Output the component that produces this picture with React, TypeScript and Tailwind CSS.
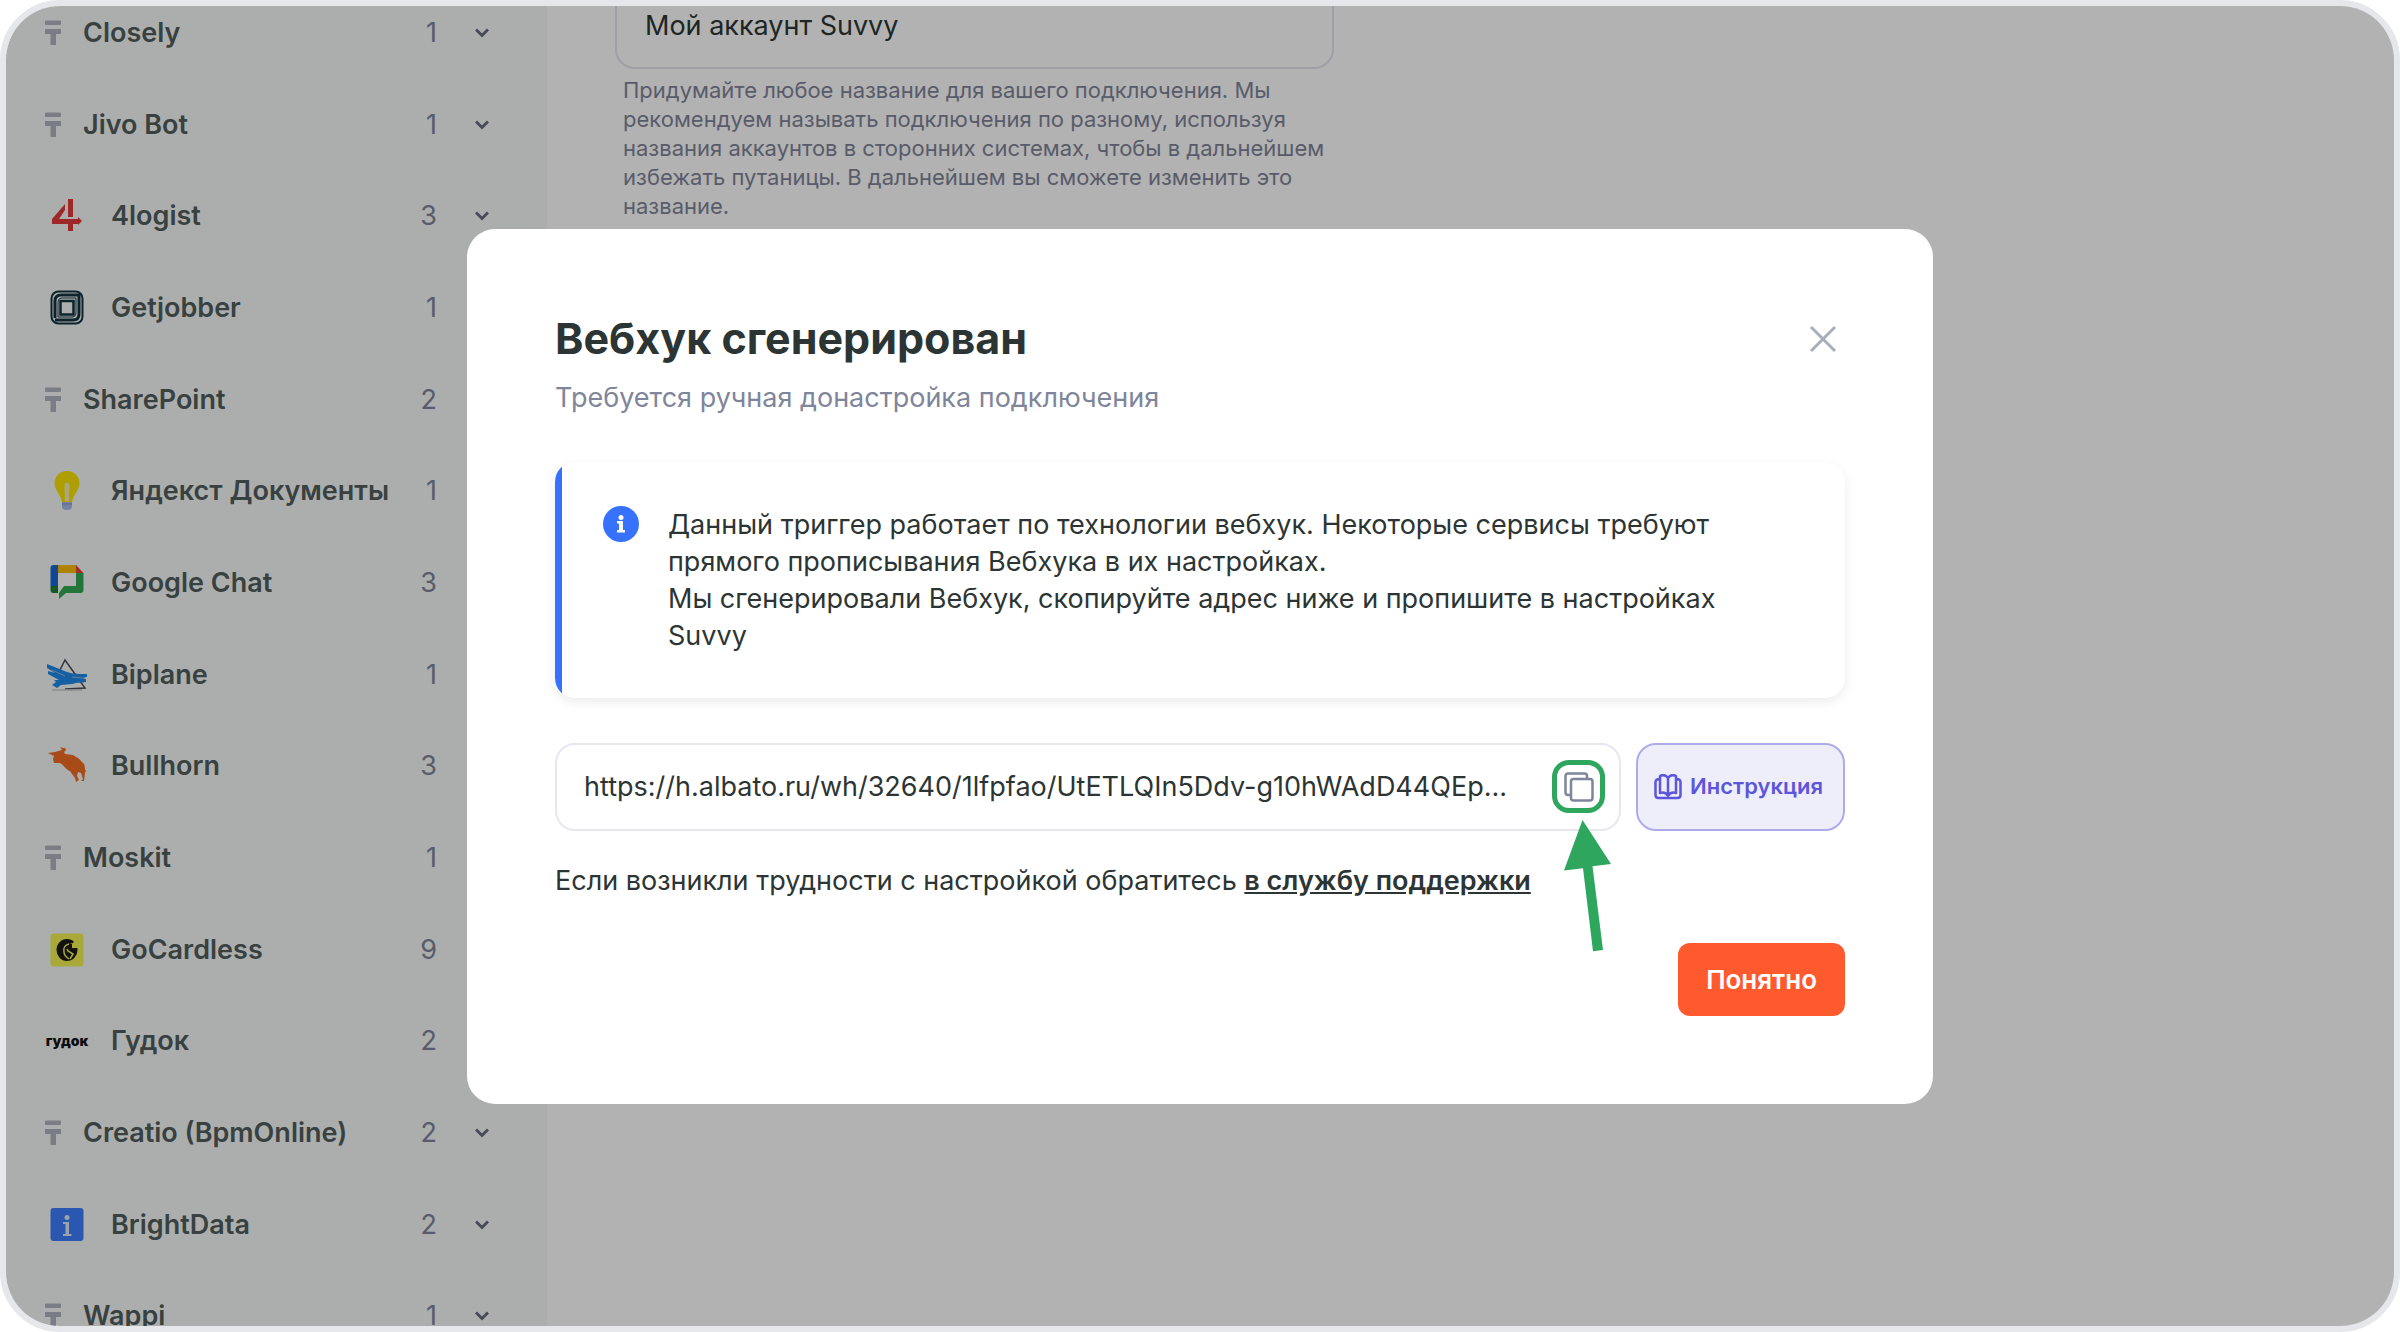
import type { ReactNode } from "react";

function PlaceholderIcon() {
  return (
    <svg viewBox="0 0 18 26" className="h-[26px] w-[18px] shrink-0" fill="#b1b4c1">
      <rect x="1" y="0.5" width="16" height="4.5" rx="1" />
      <path d="M1 9h16v5h-5v11H6.500V14H1z" />
    </svg>
  );
}

function FourLogistLogo() {
  return (
    <svg viewBox="0 0 40 40" className="size-10" fill="#e23a38">
      <path d="M21 3h5v18h-5z" />
      <path d="M18 8v6l-6 9h19v-2l4 4-4 4v-1H5v-5z" />
      <path d="M21 28h5v7h-5z" />
    </svg>
  );
}

function JobberLogo() {
  return (
    <svg viewBox="0 0 40 40" className="size-10" fill="none" stroke="#12333f">
      <rect x="4.500" y="3.500" width="31" height="32" rx="7" strokeWidth="2" />
      <path d="M8 30V13c0-4 2-6 6-6h18v19c0 4-2 6-6 6H8" strokeWidth="3" />
      <path d="M11 28V15c0-3 1-5 4-5h14v14c0 3-1 5-4 5H11z" strokeWidth="1" />
      <rect x="13.500" y="13" width="13" height="13.500" strokeWidth="2.500" />
    </svg>
  );
}

function BulbLogo() {
  return (
    <svg viewBox="0 0 40 40" className="size-10">
      <path d="M20 0C13 0 7.500 5 7.500 12c0 7 6 11 7.500 19h10c1.500-8 7.500-12 7.500-19C32.500 5 27 0 20 0z" fill="#fbe300" />
      <path d="M18 30l-.5-14h5L22 30z" fill="#f3efb4" />
      <circle cx="20" cy="14" r="2.500" fill="#f3efb4" />
      <path d="M15 31h10v5c0 2-2 3-5 3s-5-1-5-3z" fill="#a9b9e6" />
      <path d="M15 33h10" stroke="#7f95d2" />
    </svg>
  );
}

function GoogleChatLogo() {
  return (
    <svg viewBox="0 0 40 40" className="size-10">
      <path d="M11 11h18v13H11z" fill="#fff" />
      <path d="M3.500 23V5a3 3 0 013-3H11v21z" fill="#1967d2" />
      <path d="M11 2h18v8H11z" fill="#fbbc04" />
      <path d="M29 2l7.500 8H29z" fill="#ea4335" />
      <path d="M29 10h7.500v17a3 3 0 01-3 3H19l-7 6V30l5-7h12z" fill="#34a853" />
      <path d="M3.500 23H11v7H6.500a3 3 0 01-3-3z" fill="#188038" />
    </svg>
  );
}

function BiplaneLogo() {
  return (
    <svg viewBox="0 0 40 40" className="size-10">
      <path d="M12 17l6-12 20 28-20 1" fill="none" stroke="#4a4a55" strokeWidth="1.500" />
      <path d="M5 35h30" stroke="#c9c9cc" strokeWidth="1.500" />
      <path d="M0 9l20 8c6 2 12 2 20 2v3l-5 1 4 1v3c-4 1-8 0-14 2l-11 1-4 3-5-3 4-3-2-2 5 0-11-6v-3l7 2-8-5z" fill="#1f8ae8" />
      <path d="M5 15l13 6M25 22l10 1" stroke="#8fb6da" strokeWidth="1" />
    </svg>
  );
}

function BullhornLogo() {
  return (
    <svg viewBox="0 0 40 40" className="size-10" fill="#ef6c25">
      <path d="M1 7l7-1 7-2-2-3 3 1h2l1 2-2 2 1 2 8 1c3 2 6 3 9 7 3 2 3 5 3 8l1 0-1 3-1 8h-3l2-2-2-6-3-1-1 4 2 4-3 2-1-4-3-4-2-3c-4-1-6-6-10-8l-6 0-1-4 1-3z" />
    </svg>
  );
}

function GoCardlessLogo() {
  return (
    <svg viewBox="0 0 40 40" className="size-10">
      <rect x="3.500" y="3.500" width="33" height="33" rx="3" fill="#f1f252" />
      <ellipse cx="20" cy="20" rx="10.500" ry="11" fill="#1c1b18" />
      <path d="M22 14h3v4h6v-6l-3-2-2 3z" fill="#f1f252" />
      <path d="M22 14c-4 1-6 4-5 8 0 3 2 5 5 7" fill="none" stroke="#f1f252" strokeWidth="1.500" />
      <path d="M23 29l3-5-5-3-1-2" fill="none" stroke="#f1f252" strokeWidth="1.500" />
    </svg>
  );
}

function GudokLogo() {
  return <span className="text-[14px] leading-4 font-black text-[#151515]">гудок</span>;
}

function BrightDataLogo() {
  return (
    <svg viewBox="0 0 40 40" className="size-10">
      <rect x="3.500" y="3" width="33" height="33" rx="3" fill="#3d7ffc" />
      <circle cx="20" cy="12.500" r="2.500" fill="#dfe8f6" />
      <path d="M16 17h6v12h2.500v2H16v-2h2.500V19H16z" fill="#dfe8f6" />
    </svg>
  );
}

interface Service {
  name: string;
  count: number;
  logo?: ReactNode;
}

const services: Service[] = [
  { name: "Closely", count: 1 },
  { name: "Jivo Bot", count: 1 },
  { name: "4logist", count: 3, logo: <FourLogistLogo /> },
  { name: "Getjobber", count: 1, logo: <JobberLogo /> },
  { name: "SharePoint", count: 2 },
  { name: "Яндекст Документы", count: 1, logo: <BulbLogo /> },
  { name: "Google Chat", count: 3, logo: <GoogleChatLogo /> },
  { name: "Biplane", count: 1, logo: <BiplaneLogo /> },
  { name: "Bullhorn", count: 3, logo: <BullhornLogo /> },
  { name: "Moskit", count: 1 },
  { name: "GoCardless", count: 9, logo: <GoCardlessLogo /> },
  { name: "Гудок", count: 2, logo: <GudokLogo /> },
  { name: "Creatio (BpmOnline)", count: 2 },
  { name: "BrightData", count: 2, logo: <BrightDataLogo /> },
  { name: "Wappi", count: 1 },
];

function ServiceRow({ name, count, logo }: Service) {
  return (
    <li className="flex flex-1">
      <button type="button" className="flex w-full items-center pr-[58px] pl-[38px] text-left text-[27px] leading-9">
        {logo ? (
          <span className="mr-[21px] flex w-[46px] shrink-0 items-center justify-center">{logo}</span>
        ) : (
          <span className="mr-[21px] flex shrink-0"><PlaceholderIcon /></span>
        )}
        <span className="font-semibold whitespace-nowrap text-[#525d5c]">{name}</span>
        <span className="ml-auto text-[#7f8498]">{count}</span>
        <svg viewBox="0 0 14 10" className="ml-[38px] h-[10px] w-[14px] shrink-0" fill="none" stroke="#666c80" strokeWidth="3">
          <path d="M1 1.500l6 6 6-6" />
        </svg>
      </button>
    </li>
  );
}

function Sidebar() {
  return (
    <nav className="flex w-[541px] shrink-0 bg-[#f7faf9]">
      <ul className="-mt-[19px] -mb-[36px] flex flex-1 flex-col">
        {services.map((service) => (
          <ServiceRow key={service.name} {...service} />
        ))}
      </ul>
    </nav>
  );
}

function ConnectionForm() {
  return (
    <main className="min-w-0 flex-1 pl-[68px]">
      <div className="-mt-6 w-[719px]">
        <input
          aria-label="Название подключения"
          aria-describedby="name-hint"
          defaultValue="Мой аккаунт Suvvy"
          className="h-[87px] w-full rounded-[20px] border-2 border-[#e4e5ec] bg-white px-7 text-[27px] text-[#2c3534]"
        />
        <p id="name-hint" className="mt-[7px] px-2 text-[22px] leading-[29px] text-[#7f8498]">
          Придумайте любое название для вашего подключения. Мы рекомендуем называть подключения по разному,
          используя названия аккаунтов в сторонних системах, чтобы в дальнейшем избежать путаницы. В дальнейшем
          вы сможете изменить это название.
        </p>
      </div>
    </main>
  );
}

function CopyIcon() {
  return (
    <svg viewBox="0 0 30 30" className="size-[30px]" fill="none" stroke="#7f859a" strokeWidth="2.500">
      <path d="M7 23H4a2.500 2.500 0 01-2.500-2.500V4A2.500 2.500 0 014 1.500h16.500A2.500 2.500 0 0123 4v3" />
      <rect x="7" y="7" width="21.500" height="21.500" rx="2.500" />
    </svg>
  );
}

function BookIcon() {
  return (
    <svg viewBox="0 0 28 26" className="h-[26px] w-7" fill="none" stroke="#5d56dc" strokeWidth="2.500" strokeLinejoin="round">
      <path d="M14 4C12 1 9 .5 6 2v17c3-1 6-.5 8 3 2-3.500 5-4 8-3V2c-3-1.500-6-1-8 2zM14 4v18" />
      <path d="M6 5C3 5 1.500 6 1.500 8v13c0 2 1 3 3 3h19c2 0 3-1 3-3V8c0-2-1.500-3-4.500-3" />
    </svg>
  );
}

// Green pointer that leads to the copy button
function Pointer() {
  return (
    <svg
      viewBox="0 0 48 132"
      className="pointer-events-none absolute top-[60px] left-3 z-10 h-[132px] w-12 max-w-none"
      fill="#2ea65e"
    >
      <path d="M18.500 0L47 44l-18.500 2.300 10.500 83.700-10 1.300L19 48.300 0 50.500z" />
    </svg>
  );
}

function WebhookDialog() {
  return (
    <div
      role="dialog"
      aria-modal="true"
      aria-labelledby="dialog-title"
      className="flex w-[1466px] max-w-full flex-col rounded-[28px] bg-white p-[88px]"
    >
      <div className="flex items-start justify-between">
        <div>
          <h2 id="dialog-title" className="text-[43px] leading-[42px] font-bold text-[#2c3534]">
            Вебхук сгенерирован
          </h2>
          <p className="mt-[21px] text-[27px] leading-9 text-[#7f859a]">Требуется ручная донастройка подключения</p>
        </div>
        <button type="button" aria-label="Закрыть" className="mt-2 mr-2">
          <svg viewBox="0 0 28 28" className="size-7" fill="none" stroke="#a9aebd" strokeWidth="3">
            <path d="M2 2l24 24M26 2L2 26" />
          </svg>
        </button>
      </div>

      <div className="mt-[46px] overflow-hidden rounded-[20px] shadow-[0_4px_12px_rgba(0,0,0,0.08)]">
        <div className="flex border-l-[7px] border-[#3772ff] py-11 pr-20 pl-[41px]">
          <svg viewBox="0 0 36 36" className="mr-[29px] size-9 shrink-0">
            <circle cx="18" cy="18" r="18" fill="#3772ff" />
            <circle cx="18" cy="11.500" r="2.500" fill="#fff" />
            <path d="M14 15h6v9h2v2.500h-8V24h2v-6.500h-2z" fill="#fff" />
          </svg>
          <p className="text-[27px] leading-[37px] text-[#2c3534]">
            Данный триггер работает по технологии вебхук. Некоторые сервисы требуют прямого прописывания Вебхука
            в их настройках.
            <br />
            Мы сгенерировали Вебхук, скопируйте адрес ниже и пропишите в настройках Suvvy
          </p>
        </div>
      </div>

      <div className="mt-[45px] flex gap-[15px]">
        <div className="flex h-[88px] min-w-0 flex-1 items-center rounded-[20px] border-2 border-[#e6e7ef] pr-[14px] pl-[27px]">
          <input
            readOnly
            aria-label="Адрес вебхука"
            value="https://h.albato.ru/wh/32640/1lfpfao/UtETLQIn5Ddv-g10hWAdD44QEp..."
            className="min-w-0 flex-1 text-[27px] leading-9 text-[#2c3534]"
          />
          <div className="relative ml-4 shrink-0">
            <button
              type="button"
              aria-label="Скопировать"
              className="flex size-[53px] items-center justify-center rounded-[17px] border-[5px] border-[#2ea65e]"
            >
              <CopyIcon />
            </button>
            <Pointer />
          </div>
        </div>
        <button
          type="button"
          className="flex w-[209px] shrink-0 items-center justify-center gap-2 rounded-[20px] border-2 border-[#aeabec] bg-[#eeeefa] pr-1 text-[22px] font-semibold text-[#5d56dc]"
        >
          <BookIcon />
          Инструкция
        </button>
      </div>

      <p className="mt-8 text-[27px] leading-9 text-[#2c3534]">
        Если возникли трудности с настройкой обратитесь{" "}
        <a href="#support" className="font-semibold underline">в службу поддержки</a>
      </p>

      <button
        type="button"
        className="mt-11 h-[73px] self-end rounded-xl bg-[#ff5a2d] px-7 text-[26px] font-semibold text-white"
      >
        Понятно
      </button>
    </div>
  );
}

export default function App() {
  return (
    <div className="relative flex h-screen overflow-hidden rounded-[60px] border-[6px] border-[#e5e7eb] bg-white font-['Inter','Liberation_Sans',sans-serif]">
      <Sidebar />
      <ConnectionForm />
      <div className="absolute inset-0 flex items-center justify-center bg-black/30">
        <WebhookDialog />
      </div>
    </div>
  );
}
